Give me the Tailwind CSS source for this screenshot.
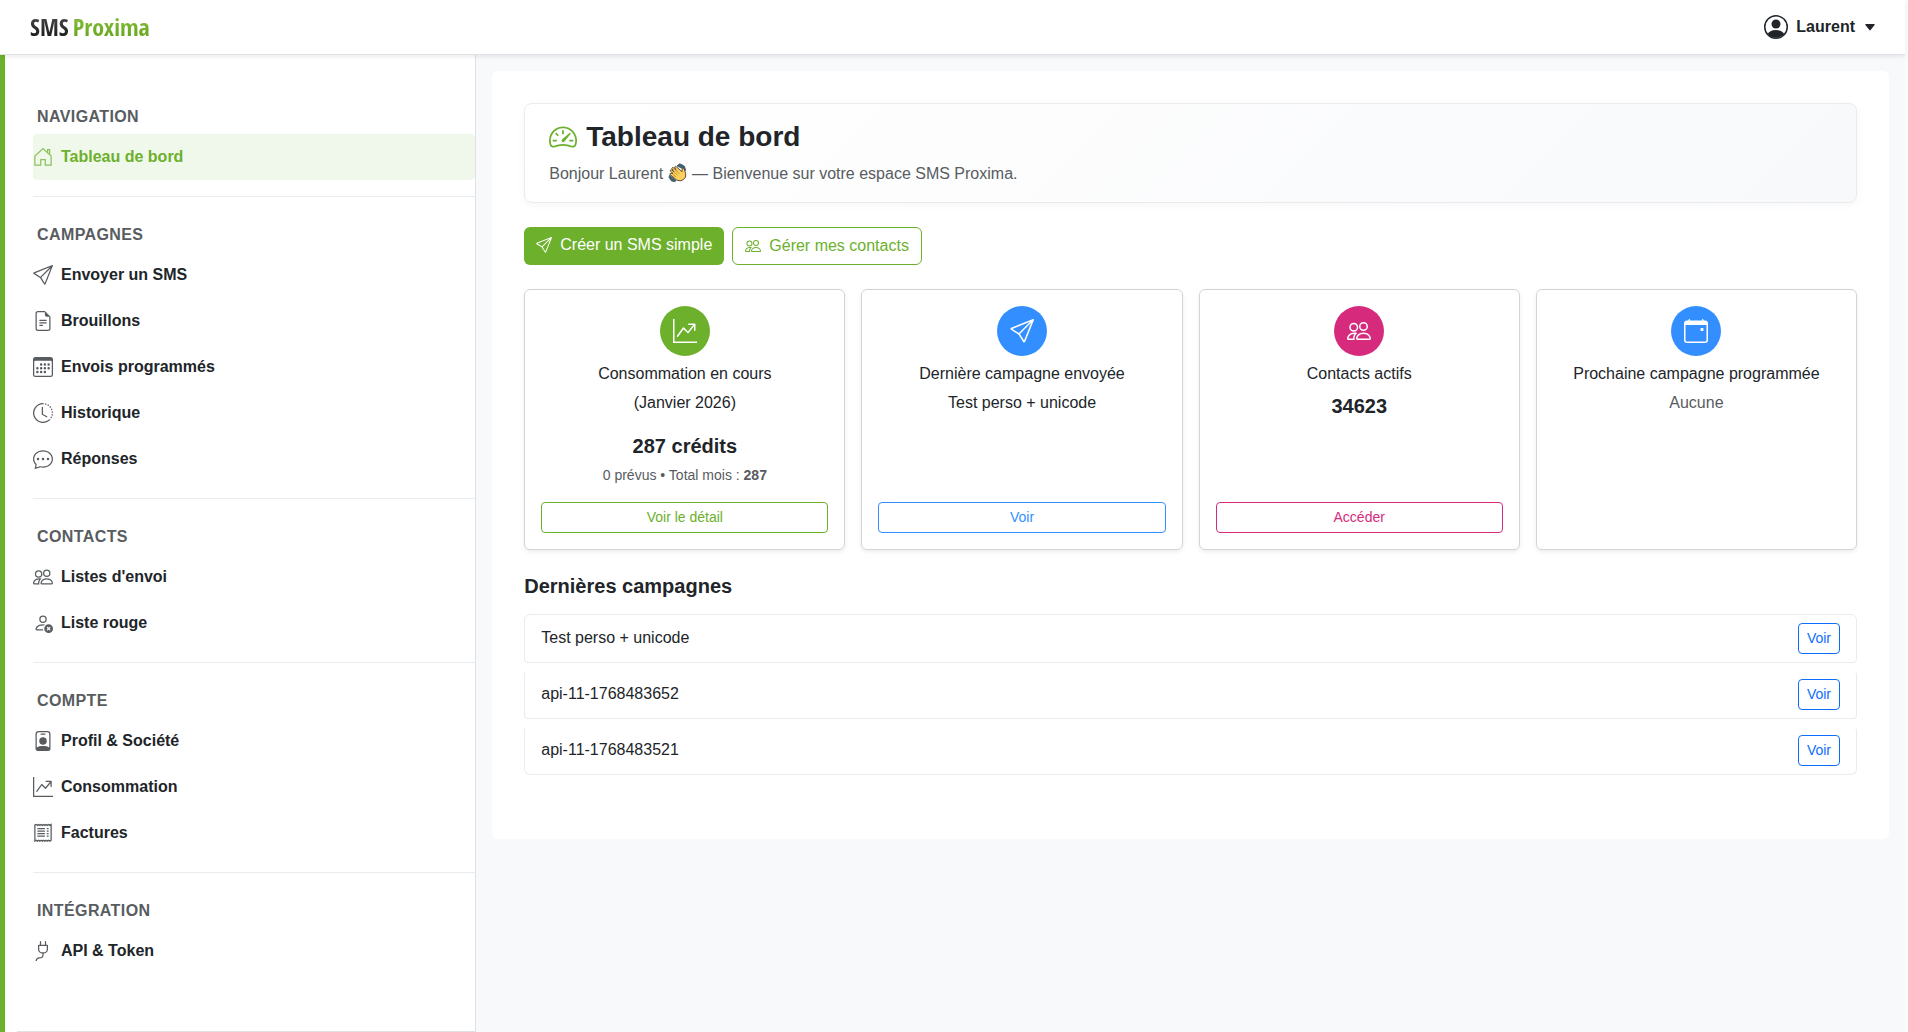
<!DOCTYPE html>
<html lang="fr">
<head>
    <meta charset="UTF-8">
    <meta name="viewport" content="width=device-width, initial-scale=1.0">
    <title>Tableau de bord | SMS Proxima</title>
    <script src="https://cdn.jsdelivr.net/npm/@tailwindcss/browser@4"></script>
</head>
<body class="bg-[#fcfcfd] pr-[3px] min-h-screen flex flex-col font-['Liberation_Sans',Arial,sans-serif] text-base text-[#212529]">

    <!-- Icon sprite -->
    <svg class="hidden" xmlns="http://www.w3.org/2000/svg">
        <symbol id="house-door" viewBox="0 0 16 16"><path fill="none" stroke="currentColor" d="M1.500 7.200V14.500H6.200V10H9.800V14.500H14.500V7.200L8 1.200ZM11.700 4.300V2H13.300V6"/></symbol>
        <symbol id="send" viewBox="0 0 16 16"><path d="M15.854.146a.5.5 0 0 1 .11.54l-5.819 14.547a.75.75 0 0 1-1.329.124l-3.178-4.995L.643 7.184a.75.75 0 0 1 .124-1.33L15.314.037a.5.5 0 0 1 .54.11ZM6.636 10.07l2.761 4.338L14.13 2.576zm6.787-8.201L1.591 6.602l4.339 2.76z"/></symbol>
        <symbol id="file" viewBox="0 0 16 16"><path d="M5.500 9a.5.5 0 0 0 0 1h5a.5.5 0 0 0 0-1zM5 7.500a.5.5 0 0 1 .5-.5h5a.5.5 0 0 1 0 1h-5a.5.5 0 0 1-.5-.5m0 4a.5.5 0 0 1 .5-.5h2a.5.5 0 0 1 0 1h-2a.5.5 0 0 1-.5-.5"/><path d="M9.500 0H4a2 2 0 0 0-2 2v12a2 2 0 0 0 2 2h8a2 2 0 0 0 2-2V4.500zm0 1v2A1.500 1.500 0 0 0 11 4.500h2V14a1 1 0 0 1-1 1H4a1 1 0 0 1-1-1V2a1 1 0 0 1 1-1z"/></symbol>
        <symbol id="calendar" viewBox="0 0 16 16"><path d="M14 0H2a2 2 0 0 0-2 2v12a2 2 0 0 0 2 2h12a2 2 0 0 0 2-2V2a2 2 0 0 0-2-2M1 3.857C1 3.384 1.448 3 2 3h12c.552 0 1 .384 1 .857v10.286c0 .473-.448.857-1 .857H2c-.552 0-1-.384-1-.857z"/><path d="M6.500 7a1 1 0 1 0 0-2 1 1 0 0 0 0 2m3 0a1 1 0 1 0 0-2 1 1 0 0 0 0 2m3 0a1 1 0 1 0 0-2 1 1 0 0 0 0 2m-9 3a1 1 0 1 0 0-2 1 1 0 0 0 0 2m3 0a1 1 0 1 0 0-2 1 1 0 0 0 0 2m3 0a1 1 0 1 0 0-2 1 1 0 0 0 0 2m3 0a1 1 0 1 0 0-2 1 1 0 0 0 0 2m-9 3a1 1 0 1 0 0-2 1 1 0 0 0 0 2m3 0a1 1 0 1 0 0-2 1 1 0 0 0 0 2m3 0a1 1 0 1 0 0-2 1 1 0 0 0 0 2"/></symbol>
        <symbol id="clock" viewBox="0 0 16 16"><path d="M8.515 1.019A7 7 0 0 0 8 1V0a8 8 0 0 1 .589.022zm2.004.45a7 7 0 0 0-.985-.299l.219-.976q.576.129 1.126.342zm1.37.71a7 7 0 0 0-.439-.27l.493-.87a8 8 0 0 1 .979.654l-.615.789a7 7 0 0 0-.418-.302zm1.834 1.79a7 7 0 0 0-.653-.796l.724-.69q.406.429.747.91zm.744 1.352a7 7 0 0 0-.214-.468l.893-.45a8 8 0 0 1 .45 1.088l-.95.313a7 7 0 0 0-.179-.483m.53 2.507a7 7 0 0 0-.1-1.025l.985-.17q.1.58.116 1.17zm-.131 1.538q.05-.254.081-.51l.993.123a8 8 0 0 1-.23 1.155l-.964-.267q.069-.247.12-.501m-.952 2.379q.276-.436.486-.908l.914.405q-.24.54-.555 1.038zm-.964 1.205q.183-.183.35-.378l.758.653a8 8 0 0 1-.401.432z"/><path d="M8 1a7 7 0 1 0 4.950 11.950l.707.707A8.001 8.001 0 1 1 8 0z"/><path d="M7.500 3a.5.5 0 0 1 .5.5v5.210l3.248 1.856a.5.5 0 0 1-.496.868l-3.500-2A.5.5 0 0 1 7 9V3.500a.5.5 0 0 1 .5-.5"/></symbol>
        <symbol id="chat" viewBox="0 0 16 16"><path d="M5 8a1 1 0 1 1-2 0 1 1 0 0 1 2 0m4 0a1 1 0 1 1-2 0 1 1 0 0 1 2 0m3 1a1 1 0 1 0 0-2 1 1 0 0 0 0 2"/><path d="m2.165 15.803.02-.004c1.83-.363 2.948-.842 3.468-1.105A9 9 0 0 0 8 15c4.418 0 8-3.134 8-7s-3.582-7-8-7-8 3.134-8 7c0 1.76.743 3.37 1.97 4.6a10.4 10.4 0 0 1-.524 2.318l-.003.011a11 11 0 0 1-.244.637c-.079.186.074.394.273.362a22 22 0 0 0 .693-.125m.8-3.108a1 1 0 0 0-.287-.801C1.618 10.83 1 9.468 1 8c0-3.192 3.004-6 7-6s7 2.808 7 6-3.004 6-7 6a8 8 0 0 1-2.088-.272 1 1 0 0 0-.711.074c-.387.196-1.24.57-2.634.893a11 11 0 0 0 .398-2"/></symbol>
        <symbol id="people" viewBox="0 0 16 16"><path d="M15 14s1 0 1-1-1-4-5-4-5 3-5 4 1 1 1 1zm-7.978-1L7 12.996c.001-.264.167-1.03.76-1.72C8.312 10.629 9.282 10 11 10c1.717 0 2.687.63 3.24 1.276.593.69.758 1.457.76 1.72l-.008.002-.014.002zM11 7a2 2 0 1 0 0-4 2 2 0 0 0 0 4m3-2a3 3 0 1 1-6 0 3 3 0 0 1 6 0M6.936 9.28a6 6 0 0 0-1.23-.247A7 7 0 0 0 5 9c-4 0-5 3-5 4q0 1 1 1h4.216A2.24 2.24 0 0 1 5 13c0-1.01.377-2.042 1.09-2.904.243-.294.526-.569.846-.816M4.92 10A5.5 5.5 0 0 0 4 13H1c0-.26.164-1.03.76-1.724.545-.636 1.492-1.256 3.16-1.275ZM1.500 5.500a3 3 0 1 1 6 0 3 3 0 0 1-6 0m3-2a2 2 0 1 0 0 4 2 2 0 0 0 0-4"/></symbol>
        <symbol id="person-x" viewBox="0 0 16 16"><path d="M11 5a3 3 0 1 1-6 0 3 3 0 0 1 6 0M8 7a2 2 0 1 0 0-4 2 2 0 0 0 0 4m.256 7a4.500 4.500 0 0 1-.229-1.004H3c.001-.246.154-.986.832-1.664C4.484 10.680 5.711 10 8 10q.390 0 .740.025c.226-.341.496-.650.804-.918Q8.844 9.002 8 9c-5 0-6 3-6 4s1 1 1 1z"/><path d="M12.500 16a3.500 3.500 0 1 0 0-7 3.500 3.500 0 0 0 0 7m-.646-4.854.646.647.646-.647a.5.5 0 0 1 .708.708l-.647.646.647.646a.5.5 0 0 1-.708.708l-.646-.647-.646.647a.5.5 0 0 1-.708-.708l.647-.646-.647-.646a.5.5 0 0 1 .708-.708"/></symbol>
        <symbol id="badge" viewBox="0 0 16 16"><path d="M6.500 2a.5.5 0 0 0 0 1h3a.5.5 0 0 0 0-1zM11 8a3 3 0 1 1-6 0 3 3 0 0 1 6 0"/><path d="M4.500 0A2.500 2.500 0 0 0 2 2.500V14a2 2 0 0 0 2 2h8a2 2 0 0 0 2-2V2.500A2.500 2.500 0 0 0 11.500 0zM3 2.500A1.500 1.500 0 0 1 4.500 1h7A1.500 1.500 0 0 1 13 2.500v10.795a4.200 4.200 0 0 0-.776-.492C11.392 12.387 10.063 12 8 12s-3.392.387-4.224.803a4.200 4.200 0 0 0-.776.492z"/></symbol>
        <symbol id="graph" viewBox="0 0 16 16"><path fill-rule="evenodd" d="M0 0h1v15h15v1H0zm10 3.500a.5.5 0 0 1 .5-.5h4a.5.5 0 0 1 .5.5v4a.5.5 0 0 1-1 0V4.900l-3.613 4.417a.5.5 0 0 1-.74.037L7.060 6.767l-3.656 5.027a.5.5 0 0 1-.808-.588l4-5.500a.5.5 0 0 1 .758-.060l2.609 2.610L13.445 4H10.500a.5.5 0 0 1-.5-.5"/></symbol>
        <symbol id="receipt" viewBox="0 0 16 16"><path fill="none" stroke="currentColor" d="M1.500 1.500v13l1-.7 1 .7 1-.7 1 .7 1-.7 1 .7 1-.7 1 .7 1-.7 1 .7 1-.7 1 .7 1-.7v-12.600l-1 .7-1-.7-1 .7-1-.7-1 .7-1-.7-1 .7-1-.7-1 .7-1-.7-1 .7-1-.7zM3.500 4.500h6M3.500 6.500h6M3.500 8.500h6M3.500 10.500h6M11 4.500h1.500M11 6.500h1.500M11 8.500h1.500M11 10.500h1.500"/></symbol>
        <symbol id="plug" viewBox="0 0 16 16"><path d="M6 0a.5.5 0 0 1 .5.5V3h3V.5a.5.5 0 0 1 1 0V3h1a.5.5 0 0 1 .5.5v3A3.500 3.500 0 0 1 8.500 10c-.002.434-.010.845-.040 1.220-.041.514-.126 1.003-.317 1.424a2.080 2.080 0 0 1-.970 1.028C6.725 13.900 6.169 14 5.500 14c-.998 0-1.610.330-1.974.718A1.920 1.920 0 0 0 3 16H2c0-.616.232-1.367.797-1.968C3.374 13.420 4.261 13 5.500 13c.581 0 .962-.088 1.218-.219.241-.123.400-.300.514-.550.121-.266.193-.621.230-1.090.027-.340.035-.718.037-1.141A3.500 3.500 0 0 1 4 6.500v-3a.5.5 0 0 1 .5-.5h1V.5A.5.5 0 0 1 6 0M5 4v2.500A2.500 2.500 0 0 0 7.500 9h1A2.500 2.500 0 0 0 11 6.500V4z"/></symbol>
        <symbol id="speedometer" viewBox="0 0 16 16"><path d="M8 4a.5.5 0 0 1 .5.5V6a.5.5 0 0 1-1 0V4.500A.5.5 0 0 1 8 4M3.732 5.732a.5.5 0 0 1 .707 0l.915.914a.5.5 0 1 1-.708.708l-.914-.915a.5.5 0 0 1 0-.707M2 10a.5.5 0 0 1 .5-.5h1.586a.5.5 0 0 1 0 1H2.500A.5.5 0 0 1 2 10m9.500 0a.5.5 0 0 1 .5-.5h1.500a.5.5 0 0 1 0 1H12a.5.5 0 0 1-.5-.5m.754-4.246a.39.39 0 0 0-.527-.020L7.547 9.310a.91.91 0 1 0 1.302 1.258l3.434-4.297a.39.39 0 0 0-.029-.518z"/><path fill-rule="evenodd" d="M0 10a8 8 0 1 1 15.547 2.661c-.442 1.253-1.845 1.602-2.932 1.250C11.309 13.488 9.475 13 8 13c-1.474 0-3.310.488-4.615.911-1.087.352-2.490.003-2.932-1.250A8 8 0 0 1 0 10m8-7a7 7 0 0 0-6.603 9.329c.203.575.923.876 1.680.630C4.397 12.533 6.358 12 8 12s3.604.532 4.923.960c.757.245 1.477-.056 1.680-.631A7 7 0 0 0 8 3"/></symbol>
        <symbol id="calendar-event" viewBox="0 0 16 16"><path d="M11 6.500a.5.5 0 0 1 .5-.5h1a.5.5 0 0 1 .5.5v1a.5.5 0 0 1-.5.5h-1a.5.5 0 0 1-.5-.5z"/><path d="M3.500 0a.5.5 0 0 1 .5.5V1h8V.5a.5.5 0 0 1 1 0V1h1a2 2 0 0 1 2 2v11a2 2 0 0 1-2 2H2a2 2 0 0 1-2-2V3a2 2 0 0 1 2-2h1V.5a.5.5 0 0 1 .5-.5M1 4v10a1 1 0 0 0 1 1h12a1 1 0 0 0 1-1V4z"/></symbol>
        <symbol id="person-circle" viewBox="0 0 16 16"><circle cx="8" cy="6" r="3"/><path d="M8 10c-3 0-4.900 1.200-5.600 2.800a8 8 0 0 0 11.200 0c-.7-1.600-2.600-2.800-5.600-2.800"/><circle cx="8" cy="8" r="7.500" fill="none" stroke="currentColor"/></symbol>
    </svg>

    <!-- Header -->
    <header class="relative z-10 h-[55px] shrink-0 bg-white border-b border-[#dee2e6] shadow-[0_2px_4px_rgba(0,0,0,0.075)] flex items-center justify-between px-[30px]">
        <a href="#" class="flex gap-1 font-['Noto_Sans_ExtraCondensed','Open_Sans_Condensed','Roboto_Condensed',sans-serif] font-bold text-2xl leading-8">
            <span class="bg-linear-to-b from-[#555] to-[#111] bg-clip-text text-transparent">SMS</span>
            <span class="bg-linear-to-b from-[#8dc63f] to-[#5f9e12] bg-clip-text text-transparent">Proxima</span>
        </a>
        <button type="button" class="flex items-center gap-2 font-bold leading-6">
            <svg class="size-6 fill-current"><use href="#person-circle"/></svg>
            <span>Laurent</span>
            <svg class="w-[10px] h-[7px] ml-0.5 fill-current" viewBox="0 0 10 7"><path d="M1 0h8q1.400 0 .6 1L5.600 6q-.6.800-1.200 0L.4 1Q-.4 0 1 0"/></svg>
        </button>
    </header>

    <div class="flex flex-1">
        <!-- Sidebar -->
        <aside class="w-1/4 shrink-0 bg-white border-l-[5px] border-l-[#6cb02c] border-r border-r-[#dee2e6] pt-[43px] flex flex-col">
            <nav class="flex-1 ml-7 font-bold leading-6">
                <h2 class="pl-1 pt-[7px] pb-[5px] tracking-wide text-[#585c5f]">NAVIGATION</h2>
                <a href="#" class="flex items-center gap-2 h-[46px] rounded bg-[#f0f8ec] text-[#6cb02c]"><svg class="size-5 fill-current opacity-75"><use href="#house-door"/></svg>Tableau de bord</a>
                <hr class="mt-4 mb-[19px] border-[#e9ecef]">

                <h2 class="pl-1 pt-[7px] pb-[5px] tracking-wide text-[#585c5f]">CAMPAGNES</h2>
                <a href="#" class="flex items-center gap-2 h-[46px]"><svg class="size-5 fill-[#585c5f]"><use href="#send"/></svg>Envoyer un SMS</a>
                <a href="#" class="flex items-center gap-2 h-[46px]"><svg class="size-5 fill-[#585c5f]"><use href="#file"/></svg>Brouillons</a>
                <a href="#" class="flex items-center gap-2 h-[46px]"><svg class="size-5 fill-[#585c5f]"><use href="#calendar"/></svg>Envois programmés</a>
                <a href="#" class="flex items-center gap-2 h-[46px]"><svg class="size-5 fill-[#585c5f]"><use href="#clock"/></svg>Historique</a>
                <a href="#" class="flex items-center gap-2 h-[46px]"><svg class="size-5 fill-[#585c5f]"><use href="#chat"/></svg>Réponses</a>
                <hr class="mt-4 mb-[19px] border-[#e9ecef]">

                <h2 class="pl-1 pt-[7px] pb-[5px] tracking-wide text-[#585c5f]">CONTACTS</h2>
                <a href="#" class="flex items-center gap-2 h-[46px]"><svg class="size-5 fill-[#585c5f]"><use href="#people"/></svg>Listes d'envoi</a>
                <a href="#" class="flex items-center gap-2 h-[46px]"><svg class="size-5 fill-[#585c5f]"><use href="#person-x"/></svg>Liste rouge</a>
                <hr class="mt-4 mb-[19px] border-[#e9ecef]">

                <h2 class="pl-1 pt-[7px] pb-[5px] tracking-wide text-[#585c5f]">COMPTE</h2>
                <a href="#" class="flex items-center gap-2 h-[46px]"><svg class="size-5 fill-[#585c5f]"><use href="#badge"/></svg>Profil &amp; Société</a>
                <a href="#" class="flex items-center gap-2 h-[46px]"><svg class="size-5 fill-[#585c5f]"><use href="#graph"/></svg>Consommation</a>
                <a href="#" class="flex items-center gap-2 h-[46px]"><svg class="size-5 text-[#585c5f]"><use href="#receipt"/></svg>Factures</a>
                <hr class="mt-4 mb-[19px] border-[#e9ecef]">

                <h2 class="pl-1 pt-[7px] pb-[5px] tracking-wide text-[#585c5f]">INTÉGRATION</h2>
                <a href="#" class="flex items-center gap-2 h-[46px]"><svg class="size-5 fill-[#585c5f]"><use href="#plug"/></svg>API &amp; Token</a>
            </nav>
            <hr class="ml-3 border-[#dee2e6]">
        </aside>

        <!-- Content -->
        <main class="flex-1 bg-[#f8f9fb] p-4">
            <div class="bg-white rounded-md px-8 pt-8 pb-16">
                <section class="border border-[#e9ecef] rounded-lg bg-linear-135 from-white to-[#f8f9fb] shadow-[0_2px_8px_rgba(0,0,0,0.04)] px-6 py-4 flex flex-col gap-2">
                    <h1 class="flex items-center gap-[9px] text-[28px] leading-[34px] font-bold"><svg class="size-7 fill-[#6cb02c]"><use href="#speedometer"/></svg>Tableau de bord</h1>
                    <p class="text-[#585c5f] leading-6">Bonjour Laurent <svg class="inline size-5 align-[-4px]" viewBox="0 0 20 20"><path fill="#3d6473" stroke="#2f3d46" stroke-width=".6" d="M9 3 11.500.8l2.500.9 2.500 1.600 1.300 4.200-2.300-1.500z"/><path fill="#3d6473" stroke="#2f3d46" stroke-width=".6" d="M1.500 12 1 14.500l2.500 3.500 3.500.8 1-1.500-4-3z"/><path fill="#ffcf5c" stroke="#4a4132" stroke-width=".9" stroke-linejoin="round" d="m5 10.500-2.800-2.700q.1-1.200 1.400-1L6 9 3.800 5.400q.3-1.300 1.600-.8L8 7.300 6.600 4q.6-1.200 1.700-.3L14 8.700l.2-3.200q1-1 1.900.2l1.700 5.300q.4 3.500-2.300 5.600-3.300 2.300-6.700.5L2 11.500q-.3-1.200 1-1.300z"/><path fill="none" stroke="#a87a2a" stroke-width=".7" d="m5.500 8.500 4 3.700M7.500 7l4 3.700M4.500 11l3.500 3"/></svg> — Bienvenue sur votre espace SMS Proxima.</p>
                </section>

                <div class="flex gap-2 mt-6">
                    <button type="button" class="h-[38px] px-3 pb-0.5 rounded-md bg-[#6cb02c] text-white flex items-center gap-2"><svg class="size-4 fill-current"><use href="#send"/></svg>Créer un SMS simple</button>
                    <button type="button" class="h-[38px] px-3 rounded-md border border-[#6cb02c] text-[#6cb02c] flex items-center gap-2"><svg class="size-4 fill-current"><use href="#people"/></svg>Gérer mes contacts</button>
                </div>

                <!-- Stat cards -->
                <div class="grid grid-cols-4 gap-4 mt-6 text-center leading-6">
                    <div class="min-h-[261px] border border-[#d3d4d5] rounded-md shadow-[0_2px_4px_rgba(0,0,0,0.075)] p-4 flex flex-col items-center">
                        <div class="size-[50px] rounded-full bg-[#6cb02c] text-white flex items-center justify-center"><svg class="size-6 fill-current"><use href="#graph"/></svg></div>
                        <h3 class="mt-1.5">Consommation en cours</h3>
                        <p class="mt-[5px]">(Janvier 2026)</p>
                        <p class="mt-[19px] text-xl leading-6 font-bold">287 crédits</p>
                        <p class="mt-[7px] text-sm leading-[21px] text-[#585c5f]">0 prévus • Total mois : <b>287</b></p>
                        <button type="button" class="mt-auto w-full h-[31px] rounded border border-[#6cb02c] text-[#6cb02c] text-sm pb-px">Voir le détail</button>
                    </div>
                    <div class="min-h-[261px] border border-[#d3d4d5] rounded-md shadow-[0_2px_4px_rgba(0,0,0,0.075)] p-4 flex flex-col items-center">
                        <div class="size-[50px] rounded-full bg-[#338fff] text-white flex items-center justify-center"><svg class="size-6 fill-current"><use href="#send"/></svg></div>
                        <h3 class="mt-1.5">Dernière campagne envoyée</h3>
                        <p class="mt-[5px]">Test perso + unicode</p>
                        <button type="button" class="mt-auto w-full h-[31px] rounded border border-[#338fff] text-[#338fff] text-sm pb-px">Voir</button>
                    </div>
                    <div class="min-h-[261px] border border-[#d3d4d5] rounded-md shadow-[0_2px_4px_rgba(0,0,0,0.075)] p-4 flex flex-col items-center">
                        <div class="size-[50px] rounded-full bg-[#d62b7d] text-white flex items-center justify-center"><svg class="size-6 fill-current"><use href="#people"/></svg></div>
                        <h3 class="mt-1.5">Contacts actifs</h3>
                        <p class="mt-2 text-xl leading-6 font-bold">34623</p>
                        <button type="button" class="mt-auto w-full h-[31px] rounded border border-[#d62b7d] text-[#d62b7d] text-sm pb-px">Accéder</button>
                    </div>
                    <div class="min-h-[261px] border border-[#d3d4d5] rounded-md shadow-[0_2px_4px_rgba(0,0,0,0.075)] p-4 flex flex-col items-center">
                        <div class="size-[50px] rounded-full bg-[#338fff] text-white flex items-center justify-center"><svg class="size-6 fill-current"><use href="#calendar-event"/></svg></div>
                        <h3 class="mt-1.5">Prochaine campagne programmée</h3>
                        <p class="mt-[5px] text-[#585c5f]">Aucune</p>
                    </div>
                </div>

                <!-- Latest campaigns -->
                <h2 class="mt-6 mb-4 text-xl leading-6 font-bold">Dernières campagnes</h2>
                <ul class="flex flex-col gap-2 leading-6">
                    <li class="flex items-center justify-between border border-[#e9ecef] rounded-t-md rounded-b px-4 py-2"><span class="pb-0.5">Test perso + unicode</span><button type="button" class="h-[31px] px-2 pb-px rounded border border-[#0d6efd] text-[#0d6efd] text-sm">Voir</button></li>
                    <li class="flex items-center justify-between border border-t-0 border-[#e9ecef] rounded px-4 py-2"><span class="pb-0.5">api-11-1768483652</span><button type="button" class="h-[31px] px-2 pb-px rounded border border-[#0d6efd] text-[#0d6efd] text-sm">Voir</button></li>
                    <li class="flex items-center justify-between border border-t-0 border-[#e9ecef] rounded-t rounded-b-md px-4 py-2"><span class="pb-0.5">api-11-1768483521</span><button type="button" class="h-[31px] px-2 pb-px rounded border border-[#0d6efd] text-[#0d6efd] text-sm">Voir</button></li>
                </ul>
            </div>
        </main>
    </div>
</body>
</html>
